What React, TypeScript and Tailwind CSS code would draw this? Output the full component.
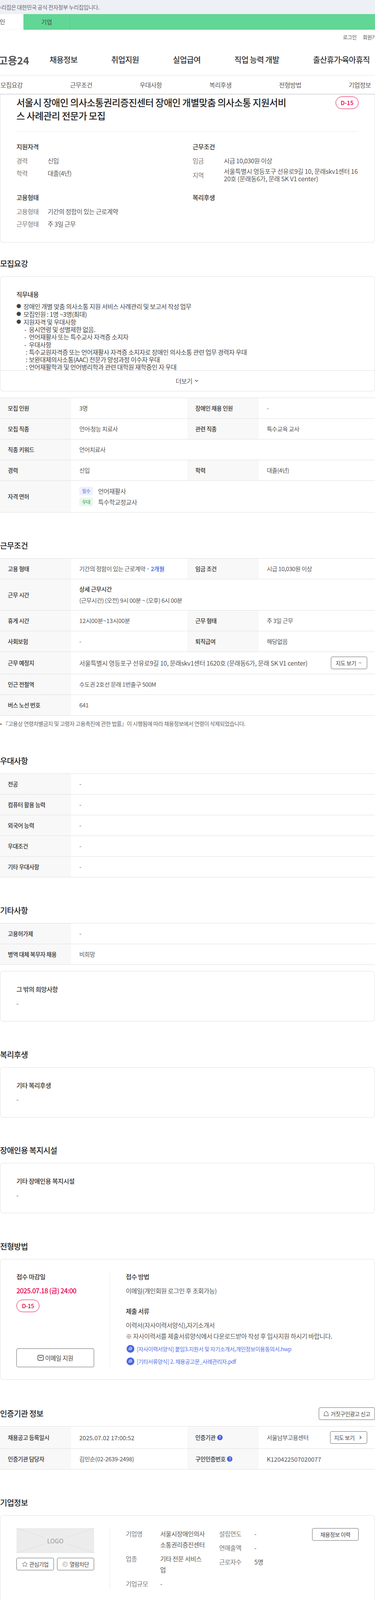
import { ChevronDown, ChevronRight, Star } from "lucide-react";
import type { ReactNode } from "react";

const tabs = ["모집요강", "근무조건", "우대사항", "복리후생", "전형방법", "기업정보"];

function Th({ children }: { children: ReactNode }) {
  return (
    <div className="flex w-[182px] shrink-0 items-center gap-1 self-stretch bg-[#f8f8f8] pl-5 text-[14.5px] font-medium tracking-[-0.03em] text-[#333]">
      {children}
    </div>
  );
}

function Td({ children, wide, className = "text-[15px] tracking-[-0.03em]" }: { children: ReactNode; wide?: boolean; className?: string }) {
  return (
    <div className={`flex items-center pl-[21px] text-[#555] ${className} ${wide ? "min-w-0 flex-1" : "w-[298px] shrink-0"}`}>
      {children}
    </div>
  );
}

function Row({ h = "h-[53px]", children }: { h?: string; children: ReactNode }) {
  return <div className={`flex border-b border-[#e0e0e0] ${h}`}>{children}</div>;
}

function Table({ children }: { children: ReactNode }) {
  return <div className="border-t border-[#e0e0e0]">{children}</div>;
}

function Title({ children, right }: { children: ReactNode; right?: ReactNode }) {
  return (
    <div className="mb-4 flex h-8 items-center justify-between">
      <h2 className="text-[20px] font-medium tracking-[-0.03em] text-[#222]">{children}</h2>
      {right}
    </div>
  );
}

function Card({ children }: { children: ReactNode }) {
  return <div className="rounded-lg border border-[#e0e0e0] bg-white">{children}</div>;
}

function SimpleCard({ label }: { label: string }) {
  return (
    <Card>
      <div className="px-[41px] pb-[34px] pt-[33px] text-[16px] leading-6 tracking-[-0.03em]">
        <p className="font-medium text-[#333]">{label}</p>
        <p className="mt-3 text-[#555]">-</p>
      </div>
    </Card>
  );
}

function SummaryRow({ label, value }: { label: string; value: ReactNode }) {
  return (
    <div className="flex items-center text-[16px] leading-6 tracking-[-0.03em]">
      <span className="w-20 shrink-0 text-[#777]">{label}</span>
      <span className="text-[#555]">{value}</span>
    </div>
  );
}

function DdayBadge() {
  return (
    <span className="flex h-8 w-[59px] shrink-0 items-center justify-center rounded-2xl border border-[#e6004e] text-[15px] font-medium text-[#e6004e]">
      D-15
    </span>
  );
}

function ClipIcon() {
  return (
    <svg viewBox="0 0 20 20" className="h-5 w-5 shrink-0">
      <circle cx="10" cy="10" r="10" fill="#4a66e0" />
      <path
        d="M6.2 13.2c-1-2.6.6-6 3.6-7 2.3-.7 3.9 1 3.3 3.3-.5 1.8-2.2 3.4-3.5 3-.9-.3-.8-1.5-.2-2.5.4-.7 1-1.3 1.7-1.5"
        fill="none"
        stroke="#fff"
        strokeWidth="1.3"
        strokeLinecap="round"
      />
    </svg>
  );
}

function MailIcon() {
  return (
    <svg viewBox="0 0 16 16" className="h-4 w-4 shrink-0" fill="none" stroke="#333" strokeWidth="1.4">
      <rect x="1" y="1.5" width="14" height="13" rx="3" />
      <path d="M4.5 6c1 2.4 6 2.4 7 0" strokeLinecap="round" />
    </svg>
  );
}

function BellIcon() {
  return (
    <svg viewBox="0 0 14 14" className="h-[14px] w-[14px] shrink-0" fill="none" stroke="#333" strokeWidth="1">
      <path d="M.7 12.5h12.600c-.8-.6-1.200-1.500-1.300-3.200C11.800 5 10.300 1.500 7 1.500S2.200 5 2 9.300c-.1 1.700-.5 2.600-1.300 3.200z" />
      <circle cx="9" cy="4.5" r=".6" fill="#333" stroke="none" />
    </svg>
  );
}

function HelpDot() {
  return (
    <span className="flex h-[14px] w-[14px] items-center justify-center rounded-full bg-[#4a66e0] text-[9px] font-bold text-white">
      ?
    </span>
  );
}

function OutlineButton({ className, children }: { className: string; children: ReactNode }) {
  return (
    <button
      type="button"
      className={`flex items-center justify-center rounded border border-[#666] bg-white text-[#444] ${className}`}
    >
      {children}
    </button>
  );
}

function Bullet({ children }: { children: ReactNode }) {
  return (
    <p className="flex">
      <span className="w-[18px] shrink-0 text-[12px]">●</span>
      {children}
    </p>
  );
}

function SubLine({ mark, children }: { mark: string; children: ReactNode }) {
  return (
    <p className={`flex ${mark === ":" ? "pl-6" : "pl-5"}`}>
      <span className={`shrink-0 ${mark === ":" ? "w-2" : "w-3"}`}>{mark}</span>
      {children}
    </p>
  );
}

export default function App() {
  return (
    <div
      className="relative h-[4100px] w-[960px] overflow-hidden bg-white text-[#333]"
      style={{ fontFamily: '"Noto Sans CJK KR", "Noto Sans", sans-serif' }}
    >
      <div className="flex h-9 items-center bg-[#edf0f5] pl-0 text-[14px] tracking-[-0.03em] text-[#666]">
        <span className="-ml-[9px]">누리집은 대한민국 공식 전자정부 누리집입니다.</span>
      </div>

      <div className="flex h-10 bg-[#62d695] text-[15px] text-[#444]">
        <div className="flex w-[60px] items-center justify-end bg-white pr-[47px] whitespace-nowrap">개인</div>
        <div className="flex w-[120px] items-center justify-center border-r border-[#55c98a]">기업</div>
      </div>

      <header className="relative z-10 bg-white shadow-[0_1px_3px_rgba(0,0,0,0.25)]">
        <div className="flex h-[38px] items-center gap-4 pl-[878px] text-[13px] tracking-[-0.03em] whitespace-nowrap text-[#555]">
          <span>로그인</span>
          <span>회원가입</span>
        </div>
        <div className="flex h-[78px] items-center whitespace-nowrap">
          <div className="-ml-[4px] w-[131px] text-[26px] font-bold text-[#555]">고용24</div>
          <nav className="flex gap-[86.5px] text-[20px] font-medium tracking-[-0.03em] text-[#333]">
            <span>채용정보</span>
            <span>취업지원</span>
            <span>실업급여</span>
            <span>직업 능력 개발</span>
            <span>
              출산휴가<span className="-mx-[4px]">·</span>육아휴직
            </span>
          </nav>
        </div>
        <div className="flex h-12 items-center border-t border-[#e5e5e5] pl-px text-[16px] tracking-[-0.03em] text-[#555]">
          {tabs.map((t) => (
            <span key={t} className="w-[178.3px] shrink-0">
              {t}
            </span>
          ))}
        </div>
      </header>

      <section className="rounded-b-lg border border-t-0 border-[#e0e0e0] px-[41px] pb-[35px] pt-[5px]">
        <div className="flex justify-between border-b border-[#e8e8e8] pb-[24px]">
          <h1 className="w-[700px] text-[24px] leading-[33.6px] font-medium tracking-[-0.03em] break-all text-[#222]">
            서울시 장애인 의사소통권리증진센터 장애인 개별맞춤 의사소통 지원서비스 사례관리 전문가 모집
          </h1>
          <div className="mt-[2px]">
            <DdayBadge />
          </div>
        </div>
        <div className="mt-[26px] grid grid-cols-[451px_1fr]">
          <div>
            <p className="text-[16px] leading-6 font-medium tracking-[-0.03em] text-[#333]">지원자격</p>
            <div className="mt-[12px] flex flex-col gap-2">
              <SummaryRow label="경력" value="신입" />
              <SummaryRow label="학력" value="대졸(4년)" />
            </div>
          </div>
          <div>
            <p className="text-[16px] leading-6 font-medium tracking-[-0.03em] text-[#333]">근무조건</p>
            <div className="mt-[12px] flex flex-col gap-[6px]">
              <SummaryRow label="임금" value="시급 10,030원 이상" />
              <SummaryRow
                label="지역"
                value={
                  <span className="block w-[347px] leading-[19px] tracking-[-0.015em] break-all">
                    서울특별시 영등포구 선유로9길 10, 문래skv1센터 1620호 (문래동6가, 문래 SK V1 center)
                  </span>
                }
              />
            </div>
          </div>
          <div className="mt-[26px]">
            <p className="text-[16px] leading-6 font-medium tracking-[-0.03em] text-[#333]">고용형태</p>
            <div className="mt-[12px] flex flex-col gap-2">
              <SummaryRow label="고용형태" value="기간의 정함이 있는 근로계약" />
              <SummaryRow label="근무형태" value="주 3일 근무" />
            </div>
          </div>
          <div className="mt-[26px]">
            <p className="text-[16px] leading-6 font-medium tracking-[-0.03em] text-[#333]">복리후생</p>
          </div>
        </div>
      </section>

      <section className="mt-[38px]">
        <Title>모집요강</Title>
        <Card>
          <div className="h-[241px] overflow-hidden border-b border-[#e0e0e0] px-[41px] pt-[33px] tracking-[-0.03em]">
            <p className="mb-[9px] text-[16px] leading-6 font-medium">직무내용</p>
            <div className="text-[16px] leading-[20px] text-[#444]">
              <Bullet>장애인 개별 맞춤 의사소통 지원 서비스  사례관리 및 보고서 작성 업무</Bullet>
              <Bullet>모집인원 : 1명 ~3명(최대)</Bullet>
              <Bullet>지원자격 및 우대사항</Bullet>
              <div className="leading-[19.2px]">
                <SubLine mark="-">응시연령 및 성별제한 없음.</SubLine>
                <SubLine mark="-">언어재활사 또는 특수교사 자격증 소지자</SubLine>
                <SubLine mark="-">우대사항</SubLine>
                <SubLine mark=":">특수교원자격증 또는 언어재활사 자격증 소지자로 장애인 의사소통 관련 업무 경력자 우대</SubLine>
                <SubLine mark=":">보완대체의사소통(AAC) 전문가 양성과정 이수자 우대</SubLine>
                <SubLine mark=":">언어재활학과 및 언어병리학과 관련 대학원 재학중인 자 우대</SubLine>
              </div>
            </div>
          </div>
          <div className="flex h-[52px] items-center justify-center gap-1 text-[16px] tracking-[-0.03em] text-[#555]">
            더보기 <ChevronDown size={14} strokeWidth={2} className="text-[#333]" />
          </div>
        </Card>
        <div className="mt-4">
          <Table>
            <Row>
              <Th>모집 인원</Th>
              <Td>3명</Td>
              <Th>장애인 채용 인원</Th>
              <Td>-</Td>
            </Row>
            <Row>
              <Th>모집 직종</Th>
              <Td>
                <span>
                  언어<span className="-mx-[3px]">·</span>청능 치료사
                </span>
              </Td>
              <Th>관련 직종</Th>
              <Td>특수교육 교사</Td>
            </Row>
            <Row>
              <Th>직종 키워드</Th>
              <Td wide>언어치료사</Td>
            </Row>
            <Row>
              <Th>경력</Th>
              <Td>신입</Td>
              <Th>학력</Th>
              <Td>대졸(4년)</Td>
            </Row>
            <Row h="h-[81px]">
              <Th>자격 면허</Th>
              <Td wide>
                <div className="flex flex-col gap-[6px] text-[16px] leading-[22px]">
                  <div className="flex items-center gap-[13px]">
                    <span className="flex h-[22px] w-[35px] items-center justify-center rounded bg-[#eef0fd] text-[12px] text-[#5a73e8]">
                      필수
                    </span>
                    언어재활사
                  </div>
                  <div className="flex items-center gap-[13px]">
                    <span className="flex h-[22px] w-[35px] items-center justify-center rounded bg-[#e8f7ec] text-[12px] text-[#2c9a55]">
                      우대
                    </span>
                    특수학교정교사
                  </div>
                </div>
              </Td>
            </Row>
          </Table>
        </div>
      </section>

      <section className="mt-[69px]">
        <Title>근무조건</Title>
        <Table>
          <Row>
            <Th>고용 형태</Th>
            <Td>
              <span>
                기간의 정함이 있는 근로계약 <span className="font-medium text-[#3f63e0]">· 2개월</span>
              </span>
            </Td>
            <Th>임금 조건</Th>
            <Td>시급 10,030원 이상</Td>
          </Row>
          <Row h="h-[80px]">
            <Th>근무 시간</Th>
            <Td wide>
              <div className="flex flex-col gap-[6px]">
                <p className="font-medium text-[#333]">상세 근무시간</p>
                <p>(근무시간) (오전) 9시 00분 ~ (오후) 6시 00분</p>
              </div>
            </Td>
          </Row>
          <Row>
            <Th>휴게 시간</Th>
            <Td className="text-[15px]">12시00분~13시00분</Td>
            <Th>근무 형태</Th>
            <Td>주 3일 근무</Td>
          </Row>
          <Row>
            <Th>사회보험</Th>
            <Td>-</Td>
            <Th>퇴직급여</Th>
            <Td>해당없음</Td>
          </Row>
          <Row h="h-[57px]">
            <Th>근무 예정지</Th>
            <Td wide>
              <div className="flex w-full items-center justify-between pr-[20px] text-[16px] tracking-[-0.015em]">
                <span>서울특별시 영등포구 선유로9길 10, 문래skv1센터 1620호 (문래동6가, 문래 SK V1 center)</span>
                <OutlineButton className="h-[32px] w-[93px] gap-1 text-[14px] tracking-[-0.03em]">
                  지도 보기 <ChevronDown size={12} />
                </OutlineButton>
              </div>
            </Td>
          </Row>
          <Row>
            <Th>인근 전철역</Th>
            <Td wide>수도권 2호선 문래 1번출구 500M</Td>
          </Row>
          <Row>
            <Th>버스 노선 번호</Th>
            <Td wide>641</Td>
          </Row>
        </Table>
        <p className="mt-[10px] text-[14px] leading-5 tracking-[-0.03em] text-[#666]">
          • 『고용상 연령차별금지 및 고령자 고용촉진에 관한 법률』이 시행됨에 따라 채용정보에서 연령이 삭제되었습니다.
        </p>
      </section>

      <section className="mt-[70px]">
        <Title>우대사항</Title>
        <Table>
          {["전공", "컴퓨터 활용 능력", "외국어 능력", "우대조건", "기타 우대사항"].map((t) => (
            <Row key={t}>
              <Th>{t}</Th>
              <Td wide>-</Td>
            </Row>
          ))}
        </Table>
      </section>

      <section className="mt-[69px]">
        <Title>기타사항</Title>
        <Table>
          <Row>
            <Th>고용허가제</Th>
            <Td wide>-</Td>
          </Row>
          <Row>
            <Th>병역 대체 복무자 채용</Th>
            <Td wide>비희망</Td>
          </Row>
        </Table>
        <div className="mt-4">
          <SimpleCard label="그 밖의 희망사항" />
        </div>
      </section>

      <section className="mt-[69px]">
        <Title>복리후생</Title>
        <SimpleCard label="기타 복리후생" />
      </section>

      <section className="mt-[68px]">
        <Title>장애인용 복지시설</Title>
        <SimpleCard label="기타 장애인용 복지시설" />
      </section>

      <section className="mt-[69px]">
        <Title>전형방법</Title>
        <Card>
          <div className="flex px-[41px] pb-[31px] pt-[32px] tracking-[-0.03em]">
            <div className="flex h-[244px] w-[199px] shrink-0 flex-col">
              <p className="text-[16px] leading-6 font-medium">접수 마감일</p>
              <p className="mt-3 text-[17px] leading-6 font-medium tracking-[-0.04em] text-[#e6004e]">2025.07.18 (금) 24:00</p>
              <div className="mt-[11px]">
                <DdayBadge />
              </div>
              <OutlineButton className="mt-auto h-[48px] w-full gap-1 text-[15.5px]">
                <MailIcon /> 이메일 지원
              </OutlineButton>
            </div>
            <div className="ml-[40px] h-[244px] w-px shrink-0 bg-[#e8e8e8]" />
            <div className="ml-[40px] text-[16px] text-[#555]">
              <p className="leading-6 font-medium text-[#333]">접수 방법</p>
              <p className="mt-3 leading-6">이메일(개인회원 로그인 후 조회가능)</p>
              <p className="mt-[28px] leading-6 font-medium text-[#333]">제출 서류</p>
              <p className="mt-3 leading-6">이력서(자사이력서양식),자기소개서</p>
              <p className="mt-1 leading-6">※ 자사이력서를 제출서류양식에서 다운로드받아 작성 후 입사지원 하시기 바랍니다.</p>
              <div className="mt-[11px] flex flex-col gap-3 text-[14px] text-[#5472e8]">
                <div className="flex h-5 items-center gap-[6px] pl-[2px]">
                  <ClipIcon />
                  [자사이력서양식] 붙임3.지원서 및 자기소개서,개인정보이용동의서.hwp
                </div>
                <div className="flex h-5 items-center gap-[6px] pl-[2px]">
                  <ClipIcon />
                  [기타서류양식] 2. 채용공고문_사례관리자.pdf
                </div>
              </div>
            </div>
          </div>
        </Card>
      </section>

      <section className="mt-[71px]">
        <Title
          right={
            <OutlineButton className="h-[32px] w-[144px] gap-1 text-[14px] tracking-[-0.04em]">
              <BellIcon /> 거짓구인광고 신고
            </OutlineButton>
          }
        >
          인증기관 정보
        </Title>
        <Table>
          <Row h="h-[57px]">
            <Th>채용공고 등록일시</Th>
            <Td className="text-[15.5px]">2025.07.02 17:00:52</Td>
            <Th>
              인증기관 <HelpDot />
            </Th>
            <Td wide>
              <div className="flex w-full items-center justify-between pr-[20px]">
                서울남부고용센터
                <OutlineButton className="h-[32px] w-[95px] gap-2 text-[14px] tracking-[-0.03em]">
                  지도 보기 <ChevronRight size={14} strokeWidth={2.5} />
                </OutlineButton>
              </div>
            </Td>
          </Row>
          <Row>
            <Th>인증기관 담당자</Th>
            <Td className="text-[15px] tracking-[-0.02em]">김민순(02-2639-2498)</Td>
            <Th>
              구인인증번호 <HelpDot />
            </Th>
            <Td className="text-[15.5px]">K120422507020077</Td>
          </Row>
        </Table>
      </section>

      <section className="mt-[69px]">
        <Title>기업정보</Title>
        <Card>
          <div className="flex px-[41px] py-[32px] text-[16px] tracking-[-0.03em]">
            <div className="w-[199px] shrink-0">
              <div className="relative flex h-16 items-center justify-center bg-[#ececec]">
                <svg viewBox="0 0 199 64" className="absolute inset-0 h-full w-full" fill="none" stroke="#dedede">
                  <path d="M0 0 72 24M199 0 127 24M0 64 72 40M199 64 127 40" />
                </svg>
                <span className="relative text-[16px] font-medium text-[#aaa]">LOGO</span>
              </div>
              <div className="mt-3 flex justify-between">
                <OutlineButton className="h-8 w-[96px] gap-1 text-[14px] tracking-[-0.04em]">
                  <Star size={15} strokeWidth={1.5} /> 관심기업
                </OutlineButton>
                <OutlineButton className="h-8 w-[95px] gap-1 text-[14px] tracking-[-0.04em]">
                  <span className="flex h-[15px] w-[15px] items-center justify-center rounded-full bg-[#d9d9d9] text-[11px] text-white">
                    ✕
                  </span>
                  열람차단
                </OutlineButton>
              </div>
            </div>
            <div className="ml-[40px] h-[156px] w-px shrink-0 bg-[#e8e8e8]" />
            <div className="ml-[40px] grid w-[208px] shrink-0 grid-cols-[88px_120px] content-start gap-y-2 leading-7 text-[#555]">
              <span className="text-[#777]">기업명</span>
              <span className="break-all">서울시장애인의사소통권리증진센터</span>
              <span className="text-[#777]">업종</span>
              <span className="break-all">기타 전문 서비스업</span>
              <span className="text-[#777]">기업규모</span>
              <span>-</span>
            </div>
            <div className="ml-[31px] grid w-[120px] grid-cols-[90px_30px] content-start gap-y-2 leading-7 text-[#555]">
              <span className="text-[#777]">설립연도</span>
              <span>-</span>
              <span className="text-[#777]">연매출액</span>
              <span>-</span>
              <span className="text-[#777]">근로자수</span>
              <span>5명</span>
            </div>
            <OutlineButton className="ml-auto h-8 w-[119px] text-[14px]">채용정보 이력</OutlineButton>
          </div>
        </Card>
      </section>
    </div>
  );
}
